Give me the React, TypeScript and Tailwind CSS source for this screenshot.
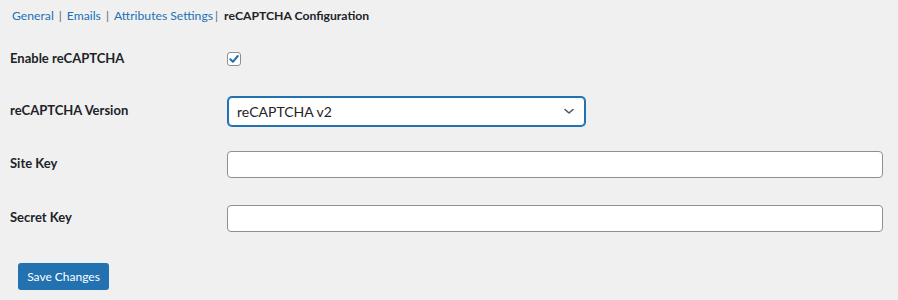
import React from "react";

export default function App() {
  const font = { fontFamily: 'Lato, "Noto Sans", sans-serif' };
  return (
    <div className="w-[898px] h-[300px] bg-[#f0f0f1] text-[#1d2327] overflow-hidden" style={font}>
      <div className="pt-[7px] pl-[12px] h-[33px] flex items-start text-[12.2px] leading-[18px]">
        <a className="text-[#2271b1]">General</a>
        <span className="text-[#646970] px-[5px]">|</span>
        <a className="text-[#2271b1]">Emails</a>
        <span className="text-[#646970] px-[5px]">|</span>
        <a className="text-[#2271b1]">Attributes Settings</a>
        <span className="text-[#646970] pl-[2px] pr-[6px]">|</span>
        <span className="font-bold">reCAPTCHA Configuration</span>
      </div>
      <div className="flex flex-col pl-[10px] pr-[15px]">
        <div className="h-[52px] grid grid-cols-[217px_1fr] items-center">
          <div className="text-[13px] font-bold">Enable reCAPTCHA</div>
          <div className="flex items-center">
            <span className="w-[14px] h-[14px] rounded-[3px] border border-[#8c8f94] bg-white flex items-center justify-center">
              <svg width="12" height="12" viewBox="0 0 12 12">
                <path d="M2.3 6.2 L4.9 8.8 L9.8 3" fill="none" stroke="#2271b1" strokeWidth="2" strokeLinecap="round" strokeLinejoin="round" />
              </svg>
            </span>
          </div>
        </div>
        <div className="h-[52px] grid grid-cols-[218px_1fr] items-center">
          <div className="text-[13px] font-bold">reCAPTCHA Version</div>
          <div>
            <div className="w-[357px] h-[29px] rounded-[4px] border border-[#2271b1] shadow-[0_0_0_1px_#2271b1] bg-white flex items-center justify-between pl-[8px] pr-[8px] text-[14px]">
              <span>reCAPTCHA v2</span>
              <svg width="14" height="14" viewBox="0 0 14 14">
                <path d="M3 5.5 L7 9 L11 5.5" fill="none" stroke="#50575e" strokeWidth="1.6" strokeLinecap="round" strokeLinejoin="round" />
              </svg>
            </div>
          </div>
        </div>
        <div className="h-[54px] grid grid-cols-[217px_1fr] items-center">
          <div className="text-[13px] font-bold">Site Key</div>
          <div className="h-[27px] rounded-[4px] border border-[#8c8f94] bg-white" />
        </div>
        <div className="h-[54px] grid grid-cols-[217px_1fr] items-center">
          <div className="text-[13px] font-bold">Secret Key</div>
          <div className="h-[27px] rounded-[4px] border border-[#8c8f94] bg-white" />
        </div>
      </div>
      <div className="pl-[18px] pt-[18px]">
        <button className="w-[91px] h-[27px] rounded-[3px] bg-[#2271b1] text-white text-[12px] flex items-center justify-center">
          Save Changes
        </button>
      </div>
    </div>
  );
}
